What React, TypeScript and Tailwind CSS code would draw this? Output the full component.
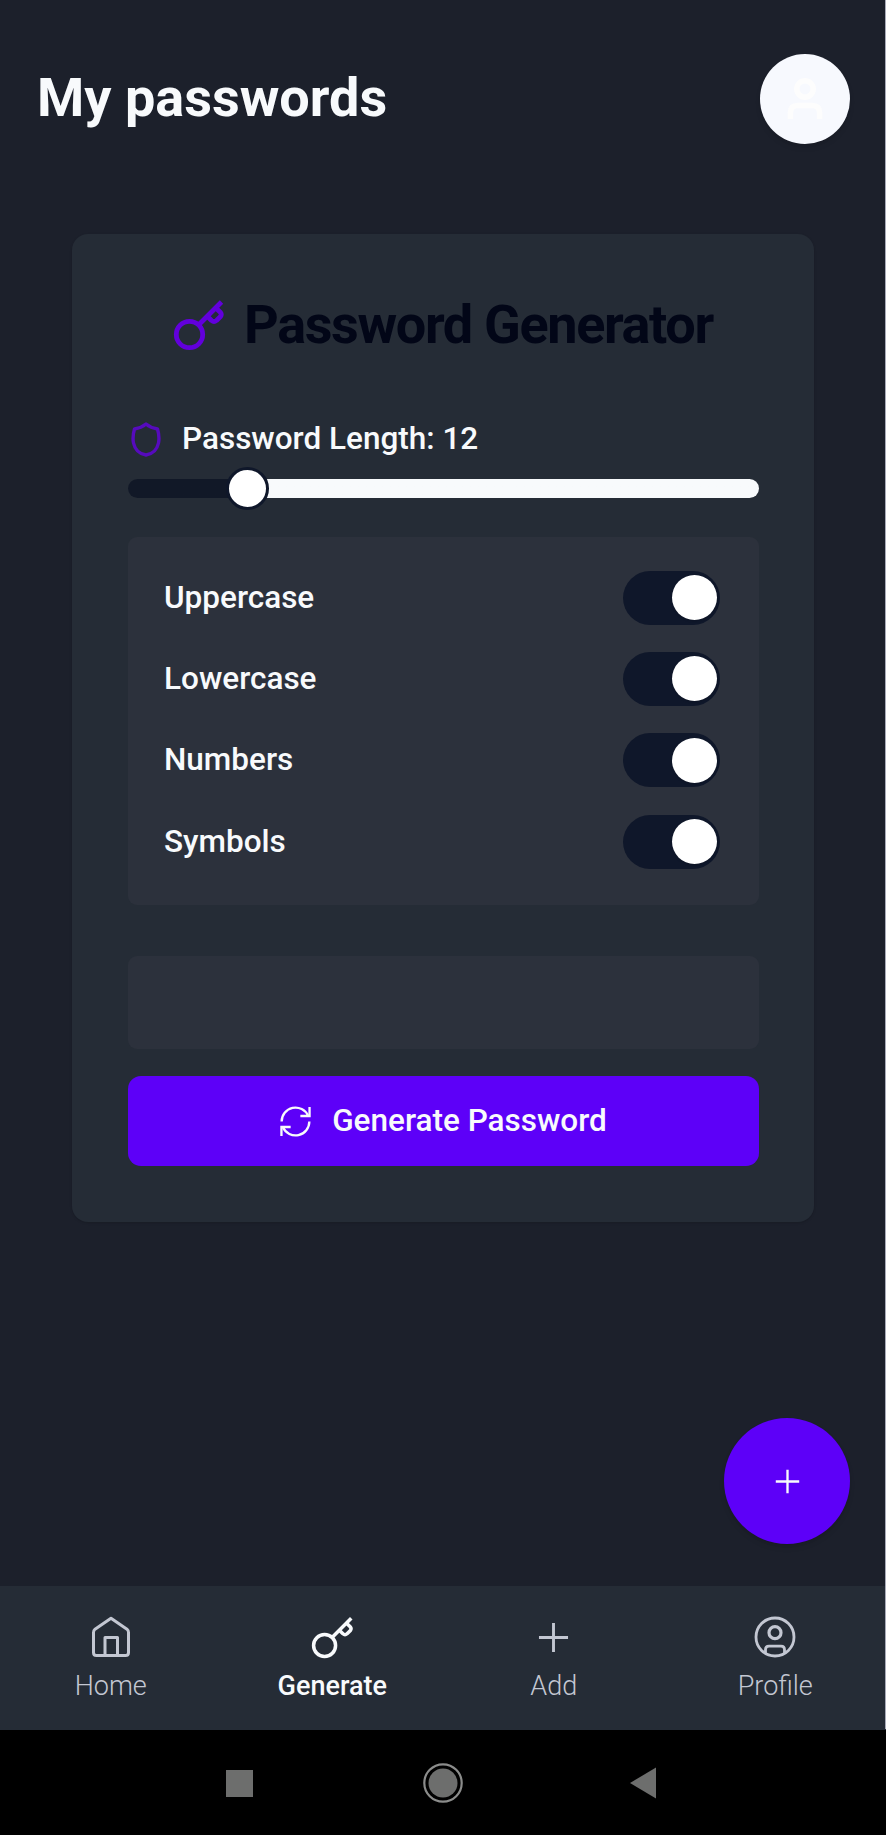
import { useState } from 'react';

interface IconProps {
  className?: string;
}

const KeyIcon = ({ className }: IconProps) => (
  <svg viewBox="0 0 54 54" fill="none" stroke="currentColor" strokeLinejoin="round" className={className}>
    <circle cx="17.500" cy="36.500" r="13.200" />
    <path d="M26.500 27 L49.500 4" />
    <path d="M35.500 18.500 L39.500 22.500 Q42 24.500 44.500 22.500 L48.500 18.500 Q50 16.500 48.500 14.500 L44.500 10.500" />
  </svg>
);

const ShieldIcon = ({ className }: IconProps) => (
  <svg viewBox="0 0 30 35" fill="none" stroke="currentColor" strokeWidth="3.400" strokeLinejoin="round" className={className}>
    <path d="M15 2 C12 4.500 8 6.300 3.500 7 C2 12 1.700 17 2.500 21 C4 28 8.500 32 15 33 C21.500 32 26 28 27.500 21 C28.300 17 28 12 26.500 7 C22 6.300 18 4.500 15 2 Z" />
  </svg>
);

const RefreshIcon = ({ className }: IconProps) => (
  <svg viewBox="0 0 32 32" fill="none" stroke="currentColor" strokeWidth="2.400" className={className}>
    <path d="M1.700 16 A14.300 14.300 0 0 1 29 10" />
    <path d="M30.300 16 A14.300 14.300 0 0 1 3 22" />
    <path d="M30.500 1 V10.300 H21" />
    <path d="M1.500 31 V21.700 H11" />
  </svg>
);

const HomeIcon = ({ className }: IconProps) => (
  <svg viewBox="0 0 42 42" fill="none" stroke="currentColor" strokeWidth="3" strokeLinejoin="round" className={className}>
    <path d="M21 2.200 L37 13.200 Q38.500 14.400 38.500 16.500 V36.500 Q38.500 39.500 35.500 39.500 H6.500 Q3.500 39.500 3.500 36.500 V16.500 Q3.500 14.400 5 13.200 Z" />
    <path d="M15 39 V21.500 H27.500 V39" />
  </svg>
);

const PlusIcon = ({ className }: IconProps) => (
  <svg viewBox="0 0 32 32" fill="none" stroke="currentColor" strokeWidth="3" className={className}>
    <path d="M16 1 V31 M1 16 H31" />
  </svg>
);

const ProfileIcon = ({ className }: IconProps) => (
  <svg viewBox="0 0 42 42" fill="none" stroke="currentColor" strokeWidth="2.800" className={className}>
    <circle cx="21" cy="21" r="19" />
    <circle cx="21" cy="16.700" r="6" strokeWidth="3.200" />
    <path d="M11.500 37 V33.500 Q11.500 30.200 15 30.200 H27 Q30.500 30.200 30.500 33.500 V37" />
  </svg>
);

const UserIcon = ({ className }: IconProps) => (
  <svg viewBox="0 0 40 46" fill="none" stroke="currentColor" strokeWidth="6" className={className}>
    <circle cx="20" cy="12" r="9" />
    <path d="M4 45 V38 Q4 30 12 30 H28 Q36 30 36 38 V45" />
  </svg>
);

const navItems = [
  { label: 'Home', Icon: HomeIcon, iconClass: 'w-[42px] h-[42px]' },
  { label: 'Generate', Icon: KeyIcon, iconClass: 'w-[45px] h-[45px] stroke-[4.2]' },
  { label: 'Add', Icon: PlusIcon, iconClass: 'w-[31px] h-[31px]' },
  { label: 'Profile', Icon: ProfileIcon, iconClass: 'w-[42px] h-[42px]' },
];

const options = ['Uppercase', 'Lowercase', 'Numbers', 'Symbols'];

export default function App() {
  const [length] = useState(12);
  const [active, setActive] = useState('Generate');
  const [enabled, setEnabled] = useState<Record<string, boolean>>({
    Uppercase: true,
    Lowercase: true,
    Numbers: true,
    Symbols: true,
  });

  return (
    <div className="relative flex h-[1835px] w-[886px] flex-col overflow-hidden bg-[#1c202b] font-['Roboto',sans-serif] text-[#f8fafc]">
      {/* Header */}
      <header className="flex h-[197px] items-center justify-between pl-[37px] pr-[36px]">
        <h1 className="pb-px text-[54px] font-bold leading-none">My passwords</h1>
        <div className="flex h-[90px] w-[90px] items-center justify-center rounded-full bg-[#f7f9fe] shadow-md">
          <UserIcon className="h-[42px] w-[38px] text-[#fdfdfd]" />
        </div>
      </header>

      {/* Generator card */}
      <main className="mx-[72px] mt-[37px] h-[988px] rounded-[16px] bg-[#252c36] pl-[56px] pr-[55px] shadow-sm">
        <div className="flex h-[181px] items-center pl-[44px]">
          <KeyIcon className="h-[54px] w-[54px] stroke-[4.8] text-[#6200dc]" />
          <h2 className="ml-[18px] text-[54px] font-bold leading-none tracking-[-1.350px] text-[#020617]">Password Generator</h2>
        </div>

        <div className="flex h-[48px] items-center">
          <ShieldIcon className="ml-[3px] h-[35px] w-[30px] text-[#560bbd]" />
          <span className="ml-[21px] text-[31.5px] font-medium leading-none">Password Length: {length}</span>
        </div>

        <div className="relative mt-[16px] h-[19px] w-[631px] overflow-visible rounded-full bg-gradient-to-r from-[#111827] from-[20%] to-[#f8fafc] to-[20%]">
          <div className="absolute left-[98px] top-[-12px] h-[43px] w-[43px] rounded-full border-[3px] border-[#0f172a] bg-white" />
        </div>

        <div className="mt-[39px] h-[368px] w-[631px] rounded-[9px] bg-[#2c313c] pl-[36px] pr-[39px] pt-[20px]">
          {options.map(name => (
            <div key={name} className="flex h-[81.3px] items-center justify-between">
              <span className="text-[31.5px] font-medium leading-none">{name}</span>
              <button
                onClick={() => setEnabled({ ...enabled, [name]: !enabled[name] })}
                className={`flex h-[54px] w-[97px] items-center rounded-full px-[3px] ${
                  enabled[name] ? 'justify-end bg-[#0f172a]' : 'justify-start bg-slate-600'
                }`}
              >
                <span className="h-[45px] w-[45px] rounded-full bg-white shadow" />
              </button>
            </div>
          ))}
        </div>

        <div className="mt-[51px] h-[93px] w-[631px] rounded-[9px] bg-[#2c313c]" />

        <button className="mt-[27px] flex h-[90px] w-[631px] items-center justify-center gap-[21px] rounded-[13px] bg-[#5d00f8]">
          <RefreshIcon className="h-[31px] w-[31px]" />
          <span className="text-[31.5px] font-medium leading-none">Generate Password</span>
        </button>
      </main>

      {/* Floating add button */}
      <button className="mr-[36px] mt-[196px] flex h-[126px] w-[126px] shrink-0 items-center justify-center self-end rounded-full bg-[#5d00f8] shadow-md">
        <PlusIcon className="h-[25px] w-[25px]" />
      </button>

      {/* Bottom navigation */}
      <nav className="mt-auto grid h-[144px] shrink-0 grid-cols-4 bg-[#252c36]">
        {navItems.map(({ label, Icon, iconClass }) => (
          <button
            key={label}
            onClick={() => setActive(label)}
            className={`flex flex-col items-center pt-[26px] ${
              active === label ? 'font-medium text-[#f8fafc]' : 'font-light text-[#c3c7d2]'
            }`}
          >
            <span className="flex h-[50px] items-center justify-center">
              <Icon className={iconClass} />
            </span>
            <span className="mt-[11px] text-[27px] leading-none">{label}</span>
          </button>
        ))}
      </nav>

      {/* System bar */}
      <footer className="flex h-[105px] shrink-0 items-center bg-black pl-[226px] pt-px">
        <span className="h-[27px] w-[27px] bg-[#6d6e6d]" />
        <svg viewBox="0 0 42 42" className="ml-[169px] h-[42px] w-[42px]">
          <circle cx="21" cy="21" r="18.700" fill="none" stroke="#8b8c8b" strokeWidth="2.200" />
          <circle cx="21" cy="21" r="14.500" fill="#6d6e6d" />
        </svg>
        <svg viewBox="0 0 26 32" className="ml-[166px] h-[32px] w-[26px]">
          <path d="M0 16 L26 0.500 V31.500 Z" fill="#6d6e6d" />
        </svg>
      </footer>

      <div className="absolute right-0 top-0 h-[1729px] w-px bg-[#a9abb8]" />
    </div>
  );
}
